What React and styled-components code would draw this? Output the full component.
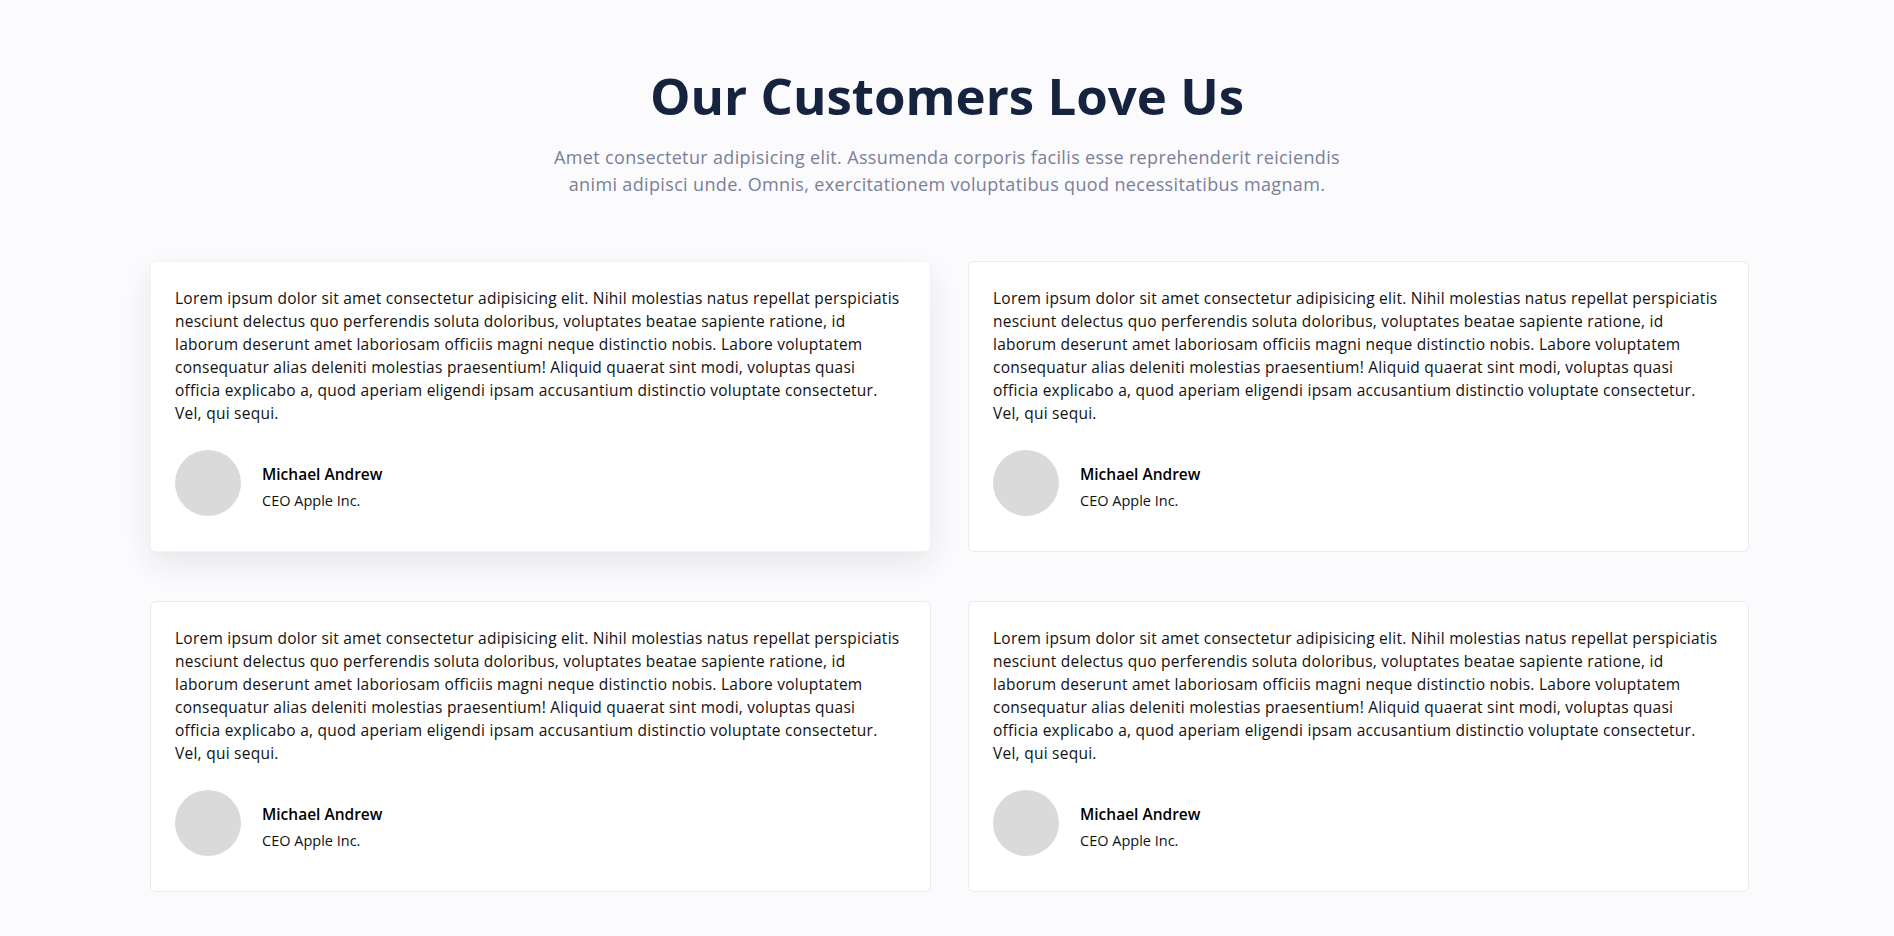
import React from "react";
import styled, { createGlobalStyle } from "styled-components";

const GlobalStyle = createGlobalStyle`
    * {
        box-sizing: border-box;
    }
    body {
        margin: 0;
        background: #fbfbfd;
        font-family: "Open Sans", "Liberation Sans", sans-serif;
        color: #111;
    }
`

const Section = styled.section`
    display: flex;
    flex-direction: column;
    align-items: center;
    padding: 65px 0 40px;
`

const Title = styled.h1`
    margin: 0;
    font-size: 51px;
    line-height: 60px;
    font-weight: 700;
    color: #15233f;
`

const Subtitle = styled.p`
    margin: 19px 0 0;
    max-width: 806px;
    text-align: center;
    font-size: 18px;
    line-height: 27px;
    color: #7a7f98;
    letter-spacing: 0.35px;
`

const Grid = styled.div`
    display: grid;
    grid-template-columns: repeat(2, 781px);
    column-gap: 37px;
    row-gap: 49px;
    margin: 63px 0 0 5px;
`

const Card = styled.div`
    background: #fff;
    border: 1px solid ${props => props.raised ? "#f3f3f5" : "#ebebee"};
    border-radius: 6px;
    padding: 25px 28px 35px 24px;
    box-shadow: ${props => props.raised ? "0 12px 30px rgba(20, 30, 60, 0.09)" : "none"};
`

const Quote = styled.p`
    margin: 0;
    font-size: 15.5px;
    line-height: 23px;
    color: #111;
    letter-spacing: 0.25px;
`

const Author = styled.div`
    display: flex;
    align-items: center;
    gap: 21px;
    margin-top: 25px;
`

const Avatar = styled.div`
    width: 66px;
    height: 66px;
    border-radius: 50%;
    background: #dadada;
    flex-shrink: 0;
`

const Info = styled.div`
    display: flex;
    flex-direction: column;
    gap: 7px;
    margin-top: 8px;
`

const Name = styled.span`
    font-size: 15.5px;
    line-height: 20px;
    font-weight: 600;
    color: #000;
`

const Role = styled.span`
    font-size: 14.5px;
    line-height: 19px;
    color: #111;
`

const text = "Lorem ipsum dolor sit amet consectetur adipisicing elit. Nihil molestias natus repellat perspiciatis nesciunt delectus quo perferendis soluta doloribus, voluptates beatae sapiente ratione, id laborum deserunt amet laboriosam officiis magni neque distinctio nobis. Labore voluptatem consequatur alias deleniti molestias praesentium! Aliquid quaerat sint modi, voluptas quasi officia explicabo a, quod aperiam eligendi ipsam accusantium distinctio voluptate consectetur. Vel, qui sequi."

const reviews = [
    { id: 1, raised: true },
    { id: 2 },
    { id: 3 },
    { id: 4 },
]

export default function App() {
    return <>
        <GlobalStyle />
        <Section>
            <Title>Our Customers Love Us</Title>
            <Subtitle>
                Amet consectetur adipisicing elit. Assumenda corporis facilis esse reprehenderit reiciendis animi adipisci unde. Omnis, exercitationem voluptatibus quod necessitatibus magnam.
            </Subtitle>
            <Grid>
                {reviews.map(r => (
                    <Card key={r.id} raised={r.raised}>
                        <Quote>{text}</Quote>
                        <Author>
                            <Avatar />
                            <Info>
                                <Name>Michael Andrew</Name>
                                <Role>CEO Apple Inc.</Role>
                            </Info>
                        </Author>
                    </Card>
                ))}
            </Grid>
        </Section>
    </>
}
